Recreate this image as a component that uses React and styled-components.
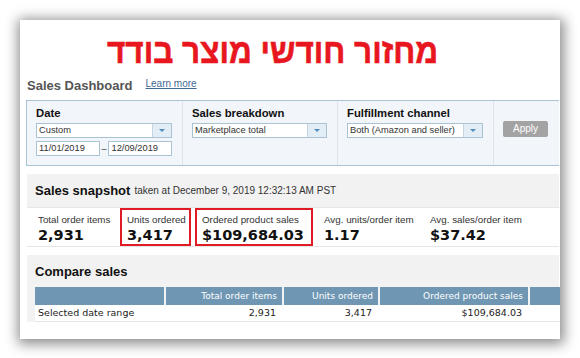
import React from "react";
import styled, { createGlobalStyle } from "styled-components";

const Global = createGlobalStyle`
  html, body { margin: 0; padding: 0; background: #fff; }
  body { font-family: "Liberation Sans", Arial, sans-serif; }
`;

const Page = styled.div`
  width: 580px;
  height: 358px;
  padding: 20px;
  box-sizing: border-box;
  overflow: hidden;
`;

const Card = styled.div`
  width: 540px;
  height: 319px;
  background: #fff;
  box-shadow: 1px 2px 12px 3px rgba(0, 0, 0, 0.45);
  padding: 0 1px 0 7px;
  box-sizing: border-box;
  overflow: hidden;
  display: flex;
  flex-direction: column;
`;

const Title = styled.h1`
  margin: 0;
  padding: 14px 0 0 80px;
  height: 56px;
  box-sizing: border-box;
  font-family: "Liberation Sans", Arial, sans-serif;
  font-weight: 700;
  font-size: 35px;
  line-height: 34px;
  color: #e8161e;
  direction: rtl;
  text-align: left;
  -webkit-text-stroke: 0.6px #e8161e;
`;

const TitleText = styled.span`
  display: inline-block;
  transform: scaleX(0.9);
  transform-origin: left center;
`;

const HeadRow = styled.div`
  display: flex;
  align-items: baseline;
  gap: 13px;
  height: 24px;
  padding-top: 2px;
  box-sizing: border-box;
`;

const PageTitle = styled.span`
  font-weight: 700;
  font-size: 13px;
  color: #555;
`;

const LearnMore = styled.a`
  font-size: 10px;
  color: #3d6a96;
  text-decoration: underline;
  position: relative;
  top: -3px;
`;

const FilterPanel = styled.div`
  margin-left: -1px;
  height: 66px;
  background: #f2f5f9;
  border: 1px solid #a9c3d5;
  border-right: none;
  box-sizing: border-box;
  display: flex;
`;

const FilterCol = styled.div`
  width: ${(p) => p.$w}px;
  padding: 5px 10px 0 9px;
  box-sizing: border-box;
  border-right: 1px solid #dde4ec;
  display: flex;
  flex-direction: column;
  gap: 3px;
`;

const ApplyCol = styled.div`
  flex: 1;
  padding: 17px 0 0 9px;
`;

const Label = styled.div`
  font-weight: 700;
  font-size: 11.3px;
  color: #111;
  line-height: 14px;
`;

const Select = styled.div`
  display: flex;
  height: 15px;
  border: 1px solid #a9c3d5;
  background: #fff;
  box-sizing: border-box;
`;

const SelectText = styled.div`
  flex: 1;
  font-size: 9.3px;
  line-height: 13px;
  color: #333;
  padding-left: 2px;
`;

const DropBtn = styled.div`
  width: 18px;
  border-left: 1px solid #c5d6e2;
  background: #e3edf5;
  display: flex;
  align-items: center;
  justify-content: center;
  &::after {
    content: "";
    border-left: 3px solid transparent;
    border-right: 3px solid transparent;
    border-top: 3px solid #4f8cc0;
  }
`;

const DateRow = styled.div`
  display: flex;
  align-items: center;
`;

const DateInput = styled.div`
  width: ${(p) => p.$w}px;
  height: 15px;
  border: 1px solid #a9c3d5;
  background: #fff;
  box-sizing: border-box;
  font-size: 9.3px;
  line-height: 13px;
  color: #333;
  padding-left: 2px;
`;

const Dash = styled.span`
  width: 9px;
  text-align: center;
  font-size: 9px;
  color: #333;
`;

const ApplyBtn = styled.button`
  width: 45px;
  height: 16px;
  border: none;
  border-radius: 2px;
  background: #a3a3a3;
  color: #fff;
  font-family: "Liberation Sans", Arial, sans-serif;
  font-size: 10px;
  padding: 0;
`;

const Section = styled.div`
  background: #f2f2f2;
  margin-top: ${(p) => p.$mt}px;
`;

const SectionHead = styled.div`
  height: ${(p) => p.$h}px;
  padding-left: 8px;
  display: flex;
  align-items: center;
  gap: 4px;
`;

const SnapTitle = styled.span`
  font-weight: 700;
  font-size: 13px;
  color: #111;
`;

const SnapNote = styled.span`
  font-size: 10px;
  color: #333;
`;

const CompareTitle = styled.span`
  font-weight: 700;
  font-size: 13px;
  color: #111;
`;

const Metrics = styled.div`
  height: 40px;
  background: #fff;
  border-top: 1px solid #e6e6e6;
  border-bottom: 1px solid #e6e6e6;
  box-sizing: border-box;
  display: flex;
  padding-left: 2px;
`;

const Metric = styled.div`
  width: ${(p) => p.$w}px;
  margin-right: ${(p) => p.$mr || 0}px;
  padding: 3px 0 0 ${(p) => (p.$boxed ? 5 : 7)}px;
  box-sizing: border-box;
  border: ${(p) => (p.$boxed ? "2px solid #e01b24" : "2px solid transparent")};
  display: flex;
  flex-direction: column;
`;

const MetricLabel = styled.div`
  font-size: 9.8px;
  line-height: 13px;
  color: #333;
  white-space: nowrap;
`;

const MetricValue = styled.div`
  font-family: "DejaVu Sans", Verdana, sans-serif;
  font-weight: 700;
  font-size: 14.5px;
  line-height: 19px;
  color: #111;
  white-space: nowrap;
`;

const Table = styled.div`
  margin-left: 8px;
  display: grid;
  grid-template-columns: 131px 118px 96px 150px 60px;
  font-family: "DejaVu Sans", Verdana, sans-serif;
`;

const Th = styled.div`
  height: 18px;
  background: #6f97b4;
  color: #fff;
  font-size: 9px;
  text-align: right;
  padding-right: 5px;
  line-height: 18px;
  margin-right: 2px;
  white-space: nowrap;
`;

const Td = styled.div`
  height: 17px;
  background: #fff;
  color: #222;
  font-size: 9.5px;
  text-align: ${(p) => (p.$left ? "left" : "right")};
  padding: ${(p) => (p.$left ? "0 0 0 3px" : "0 8px 0 0")};
  line-height: 16px;
  border-bottom: 1px solid #e8e8e8;
  box-sizing: border-box;
  white-space: nowrap;
`;

const metrics = [
  { label: "Total order items", value: "2,931", w: 89, mr: 2 },
  { label: "Units ordered", value: "3,417", w: 71, mr: 4, boxed: true },
  { label: "Ordered product sales", value: "$109,684.03", w: 118, mr: 2, boxed: true },
  { label: "Avg. units/order item", value: "1.17", w: 106 },
  { label: "Avg. sales/order item", value: "$37.42", w: 130 },
];

export default function App() {
  return (
    <>
      <Global />
      <Page>
        <Card>
          <Title>
            <TitleText>מחזור חודשי מוצר בודד</TitleText>
          </Title>
          <HeadRow>
            <PageTitle>Sales Dashboard</PageTitle>
            <LearnMore href="#">Learn more</LearnMore>
          </HeadRow>
          <FilterPanel>
            <FilterCol $w={156}>
              <Label>Date</Label>
              <Select>
                <SelectText>Custom</SelectText>
                <DropBtn />
              </Select>
              <DateRow>
                <DateInput $w={64}>11/01/2019</DateInput>
                <Dash>–</Dash>
                <DateInput $w={64}>12/09/2019</DateInput>
              </DateRow>
            </FilterCol>
            <FilterCol $w={155}>
              <Label>Sales breakdown</Label>
              <Select>
                <SelectText>Marketplace total</SelectText>
                <DropBtn />
              </Select>
            </FilterCol>
            <FilterCol $w={156}>
              <Label>Fulfillment channel</Label>
              <Select>
                <SelectText>Both (Amazon and seller)</SelectText>
                <DropBtn />
              </Select>
            </FilterCol>
            <ApplyCol>
              <ApplyBtn>Apply</ApplyBtn>
            </ApplyCol>
          </FilterPanel>
          <Section $mt={8}>
            <SectionHead $h={33}>
              <SnapTitle>Sales snapshot</SnapTitle>
              <SnapNote>taken at December 9, 2019 12:32:13 AM PST</SnapNote>
            </SectionHead>
            <Metrics>
              {metrics.map((m) => (
                <Metric key={m.label} $w={m.w} $mr={m.mr} $boxed={m.boxed}>
                  <MetricLabel>{m.label}</MetricLabel>
                  <MetricValue>{m.value}</MetricValue>
                </Metric>
              ))}
            </Metrics>
          </Section>
          <Section $mt={8}>
            <SectionHead $h={32}>
              <CompareTitle>Compare sales</CompareTitle>
            </SectionHead>
            <Table>
              <Th />
              <Th>Total order items</Th>
              <Th>Units ordered</Th>
              <Th>Ordered product sales</Th>
              <Th />
              <Td $left>Selected date range</Td>
              <Td>2,931</Td>
              <Td>3,417</Td>
              <Td>$109,684.03</Td>
              <Td />
            </Table>
          </Section>
        </Card>
      </Page>
    </>
  );
}
